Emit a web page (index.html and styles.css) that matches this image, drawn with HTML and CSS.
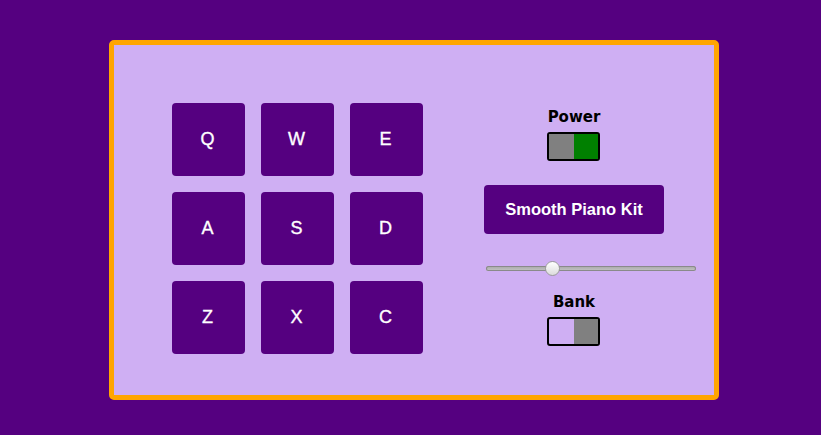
FILE: index.html
```html
<!DOCTYPE html>
<html>
<head>
<meta charset="utf-8">
<link rel="stylesheet" href="styles.css">
</head>
<body>
<div id="drum-machine" class="machine">
  <div class="pads">
    <div class="drum-pad">Q</div>
    <div class="drum-pad">W</div>
    <div class="drum-pad">E</div>
    <div class="drum-pad">A</div>
    <div class="drum-pad">S</div>
    <div class="drum-pad">D</div>
    <div class="drum-pad">Z</div>
    <div class="drum-pad">X</div>
    <div class="drum-pad">C</div>
  </div>
  <div class="controls">
    <p class="label">Power</p>
    <div class="select power"><div class="half half-left"></div><div class="half half-right"></div></div>
    <p id="display" class="display">Smooth Piano Kit</p>
    <input class="volume" type="range" min="0" max="1" step="0.01" value="0.3">
    <p class="label label-bank">Bank</p>
    <div class="select bank"><div class="half half-left"></div><div class="half half-right"></div></div>
  </div>
</div>
</body>
</html>
```

FILE: styles.css
```css
html, body {
  margin: 0;
  padding: 0;
}
body {
  background: #550080;
  width: 821px;
  height: 435px;
  overflow: hidden;
  font-family: "Liberation Sans", Arial, sans-serif;
}
.machine {
  box-sizing: border-box;
  width: 610px;
  height: 360px;
  margin: 40px 0 0 109px;
  border: 5px solid #ffa500;
  border-radius: 5px;
  background: #cfaff3;
  display: flex;
  align-items: flex-start;
  padding: 0 0 0 58px;
}
.pads {
  margin-top: 58px;
  display: grid;
  grid-template-columns: repeat(3, 73px);
  grid-auto-rows: 73px;
  gap: 16px;
}
.drum-pad {
  background: #550080;
  border-radius: 4px;
  color: #fff;
  font-size: 18px;
  -webkit-text-stroke: 0.35px #fff;
  display: flex;
  align-items: center;
  justify-content: center;
  padding: 0 2px 1px 0;
  box-sizing: border-box;
}
.controls {
  margin-top: 63px;
  margin-left: 61px;
  width: 180px;
  display: flex;
  flex-direction: column;
  align-items: center;
}
.label {
  margin: 0;
  font-family: "DejaVu Sans", sans-serif;
  font-weight: bold;
  font-size: 15px;
  line-height: 18px;
  color: #000;
}
.label-bank {
  margin-top: 17px;
}
.select {
  margin-top: 6px;
  box-sizing: border-box;
  width: 53px;
  height: 29px;
  border: 2px solid #000;
  border-radius: 3px;
  display: flex;
  margin-left: -1px;
}
.half {
  height: 100%;
}
.half-left {
  width: 25px;
}
.half-right {
  width: 24px;
}
.power .half-left {
  background: #808080;
}
.power .half-right {
  background: #008000;
}
.bank .half-left {
  background: transparent;
}
.bank .half-right {
  background: #808080;
}
.display {
  margin: 24px 0 0 0;
  width: 180px;
  height: 49px;
  box-sizing: border-box;
  background: #550080;
  border-radius: 4px;
  color: #fff;
  font-family: "Liberation Sans", Arial, sans-serif;
  font-weight: bold;
  font-size: 16.5px;
  display: flex;
  align-items: center;
  justify-content: center;
  padding-bottom: 1px;
}
.volume {
  -webkit-appearance: none;
  appearance: none;
  display: block;
  align-self: flex-start;
  margin: 26px 0 0 2px;
  padding: 0;
  width: 210px;
  height: 16px;
  background: transparent;
}
.volume::-webkit-slider-runnable-track {
  height: 5px;
  border-radius: 3px;
  background: linear-gradient(#a8a8a8, #c4c4c4);
  box-shadow: inset 0 0 0 1px #8a8a8a;
}
.volume::-webkit-slider-thumb {
  -webkit-appearance: none;
  width: 15px;
  height: 15px;
  margin-top: -5px;
  border-radius: 50%;
  background: linear-gradient(#ffffff, #dcdcdc);
  border: 1px solid #9a9a9a;
  box-sizing: border-box;
}
```
